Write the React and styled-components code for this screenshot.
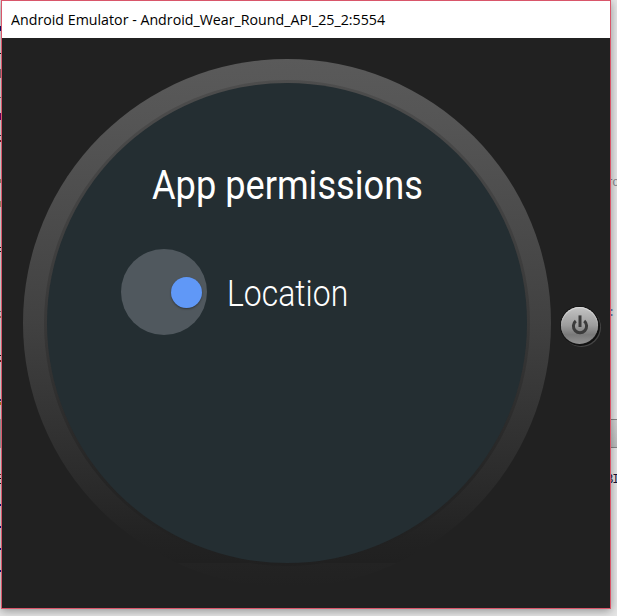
import React from 'react';
import styled, { createGlobalStyle } from 'styled-components';

const GlobalStyle = createGlobalStyle`
  * { box-sizing: border-box; }
  body { margin: 0; overflow: hidden; background: #e4e4e4; }
`;

const Desktop = styled.div`
  position: relative;
  width: 617px;
  height: 616px;
  padding-left: 1px;
  overflow: hidden;
  background: #e6e6e6;
`;

const EmulatorWindow = styled.main`
  position: relative;
  width: 610px;
  height: 609px;
  display: flex;
  flex-direction: column;
  border: 1px solid #d9566a;
  background: #212121;
  box-shadow: 0 2px 9px rgba(0, 0, 0, 0.36);
`;

const TitleBar = styled.header`
  height: 37px;
  flex: none;
  display: flex;
  align-items: center;
  padding: 0 0 2px 9px;
  background: #fff;
`;

const Title = styled.h1`
  margin: 0;
  font: 400 14.7px/20px 'Open Sans', 'Noto Sans', sans-serif;
  color: #000;
  white-space: nowrap;
  transform: scaleX(0.968);
  transform-origin: 0 50%;
`;

const Device = styled.section`
  flex: 1;
  display: flex;
  padding: 21px 0 0 21px;
`;

const Bezel = styled.div`
  flex: none;
  width: 528px;
  height: 528px;
  padding: 21px;
  border-radius: 50%;
  background: linear-gradient(#5a5a5a 0, #555 12%, #414141 50%, #2b2b2b 80%, #222 91%, #202020 95.4%, #232323 95.5%, #212121 100%);
`;

const Rim = styled.div`
  width: 486px;
  height: 486px;
  padding: 3px;
  border-radius: 50%;
  background: linear-gradient(#4d4d4d, #383838 50%, #252525 82%, #202020);
`;

const Screen = styled.div`
  width: 480px;
  height: 480px;
  border-radius: 50%;
  padding: 78px 0 0 74px;
  background: #242e32;
`;

const Heading = styled.h2`
  width: max-content;
  margin: 0 0 0 31px;
  font: 400 41px/48px Roboto, sans-serif;
  color: #fff;
  white-space: nowrap;
  transform: scaleX(0.882);
  transform-origin: 0 50%;
`;

const PermissionRow = styled.div`
  display: flex;
  align-items: center;
  gap: 20px;
  margin-top: 40px;
`;

const Toggle = styled.div`
  width: 86px;
  height: 86px;
  flex: none;
  display: flex;
  align-items: center;
  justify-content: flex-end;
  padding-right: 5px;
  border-radius: 50%;
  background: #50585e;
`;

const Thumb = styled.span`
  width: 31px;
  height: 31px;
  border-radius: 50%;
  background: #6098f7;
  box-shadow: 0 1px 2px rgba(0, 0, 0, 0.4);
`;

const Label = styled.span`
  font: 300 36px/44px Roboto, sans-serif;
  color: #fff;
  white-space: nowrap;
  padding-top: 4px;
  transform: scaleX(0.887);
  transform-origin: 0 50%;
`;

const PowerButton = styled.button`
  width: 37px;
  height: 37px;
  flex: none;
  display: grid;
  place-items: center;
  margin: 248px 0 0 10px;
  padding: 0 0 1px;
  border: 0;
  border-radius: 50%;
  background: linear-gradient(#c4c4c4, #9c9c9c 50%, #797979 75%, #929292);
  box-shadow: inset 0 1px 1px #ddd, 0 0 0 1px #161616, 1px 1px 0 1px #111, 2px 2px 0 1px #454545;
`;

const EditorFragment = styled.span`
  position: absolute;
  left: ${({ $left }) => $left}px;
  top: ${({ $top }) => $top}px;
  font: ${({ $size = 12 }) => $size}px/16px 'Liberation Mono', monospace;
  letter-spacing: -1px;
  color: ${({ $color }) => $color};
`;

const EditorMark = styled.i`
  position: absolute;
  left: 0;
  top: ${({ $top }) => $top}px;
  width: 1px;
  height: ${({ $height = 1 }) => $height}px;
  background: ${({ $color }) => $color};
`;

const ScrollEdge = styled.div`
  position: absolute;
  left: 611px;
  top: 419px;
  width: 6px;
  height: 29px;
  border: solid #858585;
  border-width: 1px 0;
  background: linear-gradient(#d2d2d2, #bdbdbd);
`;

const marks = [
  [26, 5, '#11116f'], [53, 1, '#111'], [69, 9, '#8c7078'], [97, 1, '#777'],
  [113, 7, '#78006c'], [135, 1, '#334'], [140, 2, '#821b2d'], [179, 4, '#9d8a78'],
  [201, 6, '#aa9775'], [247, 1, '#111'], [251, 1, '#111'], [311, 1, '#777'],
  [316, 2, '#a38470'], [355, 1, '#111'], [360, 2, '#722'], [399, 2, '#337'],
  [402, 3, '#b88922'], [419, 29, '#aaa'], [474, 1, '#722'], [478, 1, '#111'],
  [483, 1, '#111'], [504, 2, '#118'], [526, 2, '#118'], [548, 2, '#118'], [570, 2, '#118'],
];

export default function App() {
  return (
    <>
      <GlobalStyle />
      <Desktop>
        <EditorFragment $top={175} $left={606} $color="#85858d">ro</EditorFragment>
        <EditorFragment $top={305} $left={608} $color="#5272a5">:</EditorFragment>
        <EditorFragment $top={472} $left={606} $color="#191337">BI</EditorFragment>
        <ScrollEdge />
        {marks.map(([top, height, color]) => (
          <EditorMark key={top} $top={top} $height={height} $color={color} />
        ))}
        <EmulatorWindow>
          <TitleBar>
            <Title>Android Emulator - Android_Wear_Round_API_25_2:5554</Title>
          </TitleBar>
          <Device>
            <Bezel>
              <Rim>
                <Screen>
                  <Heading>App permissions</Heading>
                  <PermissionRow>
                    <Toggle role="switch" aria-checked="true" aria-label="Location">
                      <Thumb />
                    </Toggle>
                    <Label>Location</Label>
                  </PermissionRow>
                </Screen>
              </Rim>
            </Bezel>
            <PowerButton aria-label="Power">
              <svg width="20" height="20" viewBox="0 0 20 20" fill="none" stroke="#3b3b3b" strokeWidth="3">
                <path d="M5.8 6A6.6 6.6 0 1 0 14.2 6" />
                <path d="M10 0.4V12" />
              </svg>
            </PowerButton>
          </Device>
        </EmulatorWindow>
      </Desktop>
    </>
  );
}
